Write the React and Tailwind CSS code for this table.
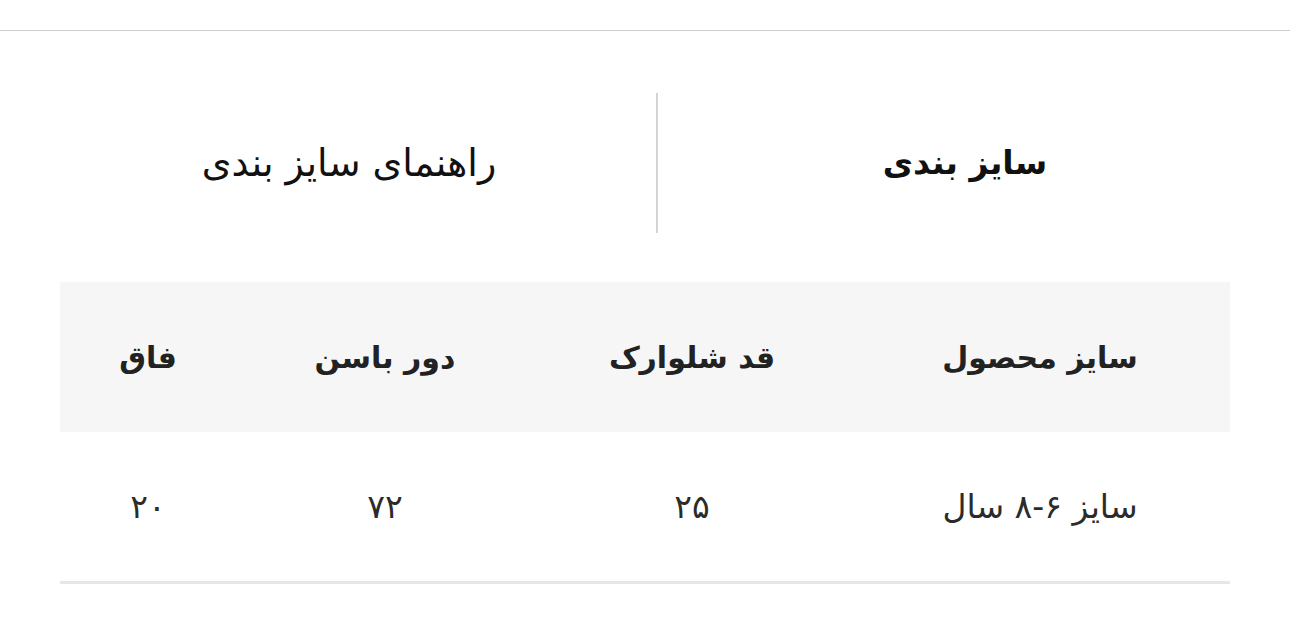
import React from "react"

const columns = [
  { title: "سایز محصول", width: "w-[380px]" },
  { title: "قد شلوارک", width: "w-[316px]" },
  { title: "دور باسن", width: "w-[298px]" },
  { title: "فاق", width: "w-[176px]" },
]

const rows = [["سایز ۶-۸ سال", "۲۵", "۷۲", "۲۰"]]

export default function App() {
  return (
    <div dir="rtl" className="min-h-screen bg-white font-['DejaVu_Sans',sans-serif] text-[#111]">
      <div className="h-[31px] border-b border-[#cccccc]" />

      <div className="mt-[62px] flex h-[140px] items-stretch">
        <div className="flex w-[632px] items-center justify-center pr-[18px]">
          <span className="text-[33px] font-bold">سایز بندی</span>
        </div>
        <div className="w-[2px] bg-[#d4d4d4]" />
        <div className="flex w-[656px] items-center justify-center pl-[42px]">
          <span className="text-[38px]">راهنمای سایز بندی</span>
        </div>
      </div>

      <div className="mx-[60px] mt-[49px]">
        <table className="w-full table-fixed border-collapse">
          <thead>
            <tr className="h-[150px] bg-[#f6f6f6]">
              {columns.map((col) => (
                <th key={col.title} className={`${col.width} text-center text-[30px] font-bold text-[#222]`}>
                  {col.title}
                </th>
              ))}
            </tr>
          </thead>
          <tbody>
            {rows.map((row, i) => (
              <tr key={i} className="h-[150px] border-b-[3px] border-[#e6e6e6]">
                {row.map((cell, j) => (
                  <td key={j} className="text-center text-[33px] text-[#2b2b2b]">
                    {cell}
                  </td>
                ))}
              </tr>
            ))}
          </tbody>
        </table>
      </div>
    </div>
  )
}
